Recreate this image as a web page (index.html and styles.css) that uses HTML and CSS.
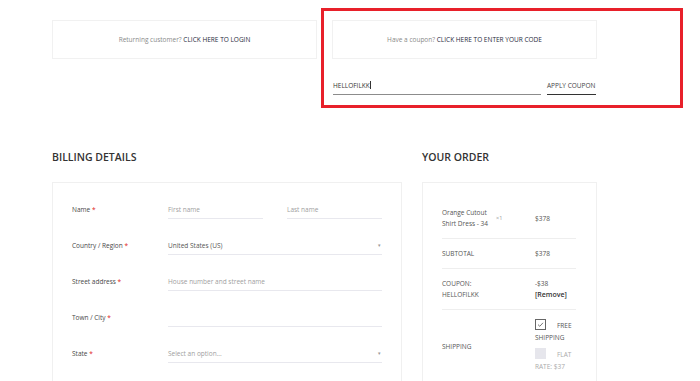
FILE: index.html
```html
<!DOCTYPE html>
<html lang="en">
<head>
    <meta charset="UTF-8">
    <meta name="viewport" content="width=device-width, initial-scale=1.0">
    <title>Checkout</title>
    <link rel="stylesheet" href="styles.css">
</head>
<body>
    <div class="page">
        <div class="notices">
            <div class="notice login-notice">
                Returning customer? <a href="#">CLICK HERE TO LOGIN</a>
            </div>

            <!-- highlighted coupon area -->
            <div class="coupon-area">
                <div class="notice">
                    Have a coupon? <a href="#">CLICK HERE TO ENTER YOUR CODE</a>
                </div>
                <form class="coupon-form">
                    <div class="coupon-input">HELLOFILKK<span class="caret"></span></div>
                    <button type="button" class="apply">APPLY COUPON</button>
                </form>
            </div>
        </div>

        <div class="checkout">
            <div class="billing">
                <h3>BILLING DETAILS</h3>
                <div class="card billing-card">
                    <div class="field-row">
                        <label>Name <span class="req">*</span></label>
                        <div class="field-pair">
                            <div class="field placeholder">First name</div>
                            <div class="field placeholder">Last name</div>
                        </div>
                    </div>
                    <div class="field-row">
                        <label>Country / Region <span class="req">*</span></label>
                        <div class="field select">United States (US)<span class="arrow">&#9662;</span></div>
                    </div>
                    <div class="field-row">
                        <label>Street address <span class="req">*</span></label>
                        <div class="field placeholder">House number and street name</div>
                    </div>
                    <div class="field-row">
                        <label>Town / City <span class="req">*</span></label>
                        <div class="field"></div>
                    </div>
                    <div class="field-row">
                        <label>State <span class="req">*</span></label>
                        <div class="field select placeholder">Select an option...<span class="arrow">&#9662;</span></div>
                    </div>
                </div>
            </div>

            <div class="order">
                <h3>YOUR ORDER</h3>
                <div class="card order-card">
                    <div class="order-row">
                        <div class="product">
                            <span class="product-name">Orange Cutout Shirt Dress - 34</span>
                            <span class="qty">&times;1</span>
                        </div>
                        <div>$378</div>
                    </div>
                    <div class="order-row">
                        <div>SUBTOTAL</div>
                        <div>$378</div>
                    </div>
                    <div class="order-row">
                        <div>COUPON:<br>HELLOFILKK</div>
                        <div>-$38<br><a href="#" class="remove">[Remove]</a></div>
                    </div>
                    <div class="order-row shipping-row">
                        <div>SHIPPING</div>
                        <div class="ship-options">
                            <div class="ship-option"><span class="box checked">
                                <svg viewBox="0 0 11 11" width="11" height="11"><path d="M3 5.6 L4.8 7.3 L8 3.8" fill="none" stroke="#555" stroke-width="0.8"/></svg>
                            </span>FREE SHIPPING</div>
                            <div class="ship-option muted"><span class="box"></span>FLAT RATE: $37</div>
                        </div>
                    </div>
                </div>
            </div>
        </div>
    </div>
</body>
</html>
```

FILE: styles.css
```css
body {
    margin: 0;
    padding: 0;
    background: #fff;
    font-family: "Open Sans", "Noto Sans", sans-serif;
    font-size: 6.5px;
    color: #555;
}

a {
    color: #1f2a3c;
    text-decoration: none;
}

.page {
    padding: 8px 0 0 52px;
}

/* Notices */
.notices {
    display: flex;
    align-items: flex-start;
}

.notice {
    box-sizing: border-box;
    width: 265px;
    height: 39px;
    border: 1px solid #f1f1f1;
    text-align: center;
    line-height: 37px;
    color: #8a8a8a;
}

.login-notice {
    margin-top: 12px;
    margin-right: 4px;
}

.coupon-area {
    border: 3px solid #e8202a;
    padding: 9px 83px 10px 8px;
}

.coupon-form {
    display: flex;
    align-items: flex-end;
    margin-top: 19px;
    padding-left: 1px;
}

.coupon-input {
    box-sizing: border-box;
    width: 208px;
    height: 17px;
    border-bottom: 1px solid #8c8c8c;
    color: #333;
    display: flex;
    align-items: center;
    padding-bottom: 2px;
}

.caret {
    display: inline-block;
    width: 1px;
    height: 8px;
    background: #333;
}

.apply {
    margin-left: 6px;
    height: 17px;
    padding: 0 0 2px;
    border: none;
    border-bottom: 1px solid #333;
    background: none;
    font: inherit;
    color: #444;
    width: 49px;
    text-align: left;
    white-space: nowrap;
}

/* Checkout columns */
.checkout {
    display: flex;
    gap: 20px;
    margin-top: 42px;
}

h3 {
    margin: 0 0 18px;
    font-size: 10.5px;
    font-weight: 600;
    line-height: 14px;
    color: #333;
}

.card {
    box-sizing: border-box;
    border: 1px solid #f0f0f0;
}

.billing-card {
    width: 350px;
    padding: 17px 20px 20px 19px;
}

.field-row {
    display: grid;
    grid-template-columns: 96px 214px;
    align-items: center;
    margin-bottom: 17px;
}

.field-row label {
    color: #484848;
    margin-top: -1px;
}

.req {
    color: #e02020;
}

.field-pair {
    display: flex;
    gap: 24px;
}

.field-pair .field {
    flex: 1;
}

.field {
    box-sizing: border-box;
    height: 19px;
    border-bottom: 1px solid #e8e8ee;
    display: flex;
    align-items: center;
    color: #555;
}

.placeholder {
    color: #a0a0a0;
}

.select {
    justify-content: space-between;
}

.arrow {
    font-size: 5px;
    color: #999;
    margin-right: 1px;
}

/* Order summary */
.order-card {
    width: 175px;
    padding: 15px 20px 10px 19px;
}

.order-row {
    display: grid;
    grid-template-columns: 93px 43px;
    align-items: center;
    line-height: 11px;
    padding: 9px 0;
    border-bottom: 1px solid #eeeeee;
}

.product {
    display: flex;
    align-items: center;
}

.product-name {
    width: 48px;
}

.qty {
    margin-left: 6px;
    color: #999;
    font-size: 5.5px;
}

.remove {
    color: #333;
    font-weight: 600;
    font-size: 7px;
}

.shipping-row {
    border-bottom: none;
    padding-top: 9px;
}

.ship-option {
    line-height: 12px;
}

.ship-option + .ship-option {
    margin-top: 4px;
}

.muted {
    color: #aaa;
}

.box {
    display: inline-block;
    box-sizing: border-box;
    width: 11px;
    height: 11px;
    margin-right: 11px;
    vertical-align: -2px;
    background: #e6e6ec;
}

.box.checked {
    background: #fff;
    border: 1px solid #666;
}

.box.checked svg {
    display: block;
    margin: -1px;
}
```
